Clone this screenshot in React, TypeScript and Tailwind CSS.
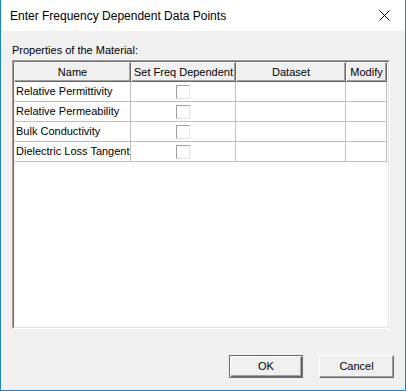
import React from 'react';

const rows = [
  'Relative Permittivity',
  'Relative Permeability',
  'Bulk Conductivity',
  'Dielectric Loss Tangent',
];

const sans = "font-['Liberation_Sans',Arial,sans-serif]";

function HeaderCell({ label, width }: { label: string; width: string }) {
  return (
    <div
      className={`${width} h-[20px] shrink-0 bg-[#f0f0f0] border-t border-l border-white border-r border-b border-r-[#696969] border-b-[#696969] shadow-[inset_-1px_-1px_0_#a0a0a0] flex items-center justify-center text-[11px] text-black leading-none`}
    >
      {label}
    </div>
  );
}

function Checkbox() {
  return (
    <div className="w-[14px] h-[14px] bg-white border border-t-[#a0a0a0] border-l-[#a0a0a0] border-r-[#e3e3e3] border-b-[#e3e3e3]" />
  );
}

export default function App() {
  return (
    <div
      className={`w-[406px] h-[391px] flex flex-col border-l border-r border-b border-[#1883d7] bg-[#f0f0f0] ${sans}`}
    >
      {/* title bar */}
      <div className="h-[31px] bg-white flex items-center justify-between pl-[9px] pr-[15px]">
        <span className="text-[12px] text-black">Enter Frequency Dependent Data Points</span>
        <svg width="11" height="11" viewBox="0 0 11 11" className="block">
          <path d="M0.5 0.5 L10.5 10.5 M10.5 0.5 L0.5 10.5" stroke="#000" strokeWidth="1" />
        </svg>
      </div>

      <div className="flex-1 flex flex-col pl-[11px] pr-[14px]">
        <div className="pt-[13px] leading-[13px] text-[11px] text-black">Properties of the Material:</div>

        {/* grid */}
        <div className="mt-[3px] w-[378px] h-[269px] border border-t-[#a0a0a0] border-l-[#a0a0a0] border-r-white border-b-white">
          <div className="w-full h-full bg-white border border-t-[#696969] border-l-[#696969] border-r-[#e3e3e3] border-b-[#e3e3e3]">
            <div className="flex">
              <HeaderCell label="Name" width="w-[117px]" />
              <HeaderCell label="Set Freq Dependent" width="w-[105px]" />
              <HeaderCell label="Dataset" width="w-[110px]" />
              <HeaderCell label="Modify" width="w-[41px]" />
            </div>
            {rows.map((r) => (
              <div key={r} className="flex h-[20px]">
                <div className="w-[117px] shrink-0 border-r border-b border-[#c0c0c0] flex items-center pl-[2px] text-[11px] text-black leading-none whitespace-nowrap overflow-hidden">
                  {r}
                </div>
                <div className="w-[105px] shrink-0 border-r border-b border-[#c0c0c0] flex items-center justify-center">
                  <Checkbox />
                </div>
                <div className="w-[110px] shrink-0 border-r border-b border-[#c0c0c0]" />
                <div className="w-[41px] shrink-0 border-r border-b border-[#c0c0c0]" />
              </div>
            ))}
          </div>
        </div>

        <div className="mt-[26px] mr-[-3px] flex justify-end gap-[16px]">
          <button className="w-[74px] h-[23px] border border-[#696969] bg-[#f0f0f0] text-[11px] text-black shadow-[inset_1px_1px_0_#fff,inset_-1px_-1px_0_#696969,inset_-2px_-2px_0_#a0a0a0] flex items-center justify-center">
            OK
          </button>
          <button className="w-[75px] h-[23px] border border-t-white border-l-white border-r-[#696969] border-b-[#696969] bg-[#f0f0f0] text-[11px] text-black shadow-[inset_-1px_-1px_0_#a0a0a0] flex items-center justify-center">
            Cancel
          </button>
        </div>
      </div>
    </div>
  );
}
